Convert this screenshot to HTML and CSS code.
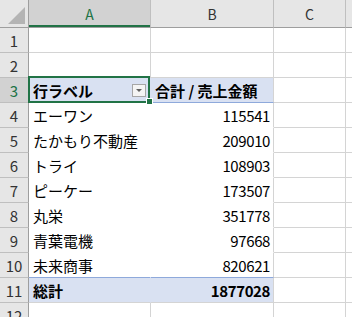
FILE: index.html
```html
<!DOCTYPE html>
<html lang="ja">
<head>
    <meta charset="UTF-8">
    <meta name="viewport" content="width=device-width, initial-scale=1.0">
    <title>ピボットテーブル</title>
    <link rel="stylesheet" href="styles.css">
</head>
<body>
    <!-- Worksheet grid: row header + columns A, B, C and a sliver of D -->
    <div class="sheet">
        <div class="corner"><span class="corner-tri"></span></div>
        <div class="colhead selected">A</div>
        <div class="colhead">B</div>
        <div class="colhead">C</div>
        <div class="colhead"></div>

        <div class="rowhead">1</div>
        <div class="cell"></div><div class="cell"></div><div class="cell"></div><div class="cell"></div>

        <div class="rowhead">2</div>
        <div class="cell"></div><div class="cell"></div><div class="cell"></div><div class="cell"></div>

        <!-- Pivot table header -->
        <div class="rowhead selected">3</div>
        <div class="cell pivot-head label active">
            <span>行ラベル</span>
            <span class="filter-btn"><span class="filter-arrow"></span></span>
            <span class="selbox"></span>
            <span class="fill-handle"></span>
        </div>
        <div class="cell pivot-head">合計 / 売上金額</div>
        <div class="cell"></div><div class="cell"></div>

        <div class="rowhead">4</div>
        <div class="cell pivot label">エーワン</div><div class="cell pivot num">115541</div>
        <div class="cell"></div><div class="cell"></div>

        <div class="rowhead">5</div>
        <div class="cell pivot label">たかもり不動産</div><div class="cell pivot num">209010</div>
        <div class="cell"></div><div class="cell"></div>

        <div class="rowhead">6</div>
        <div class="cell pivot label">トライ</div><div class="cell pivot num">108903</div>
        <div class="cell"></div><div class="cell"></div>

        <div class="rowhead">7</div>
        <div class="cell pivot label">ピーケー</div><div class="cell pivot num">173507</div>
        <div class="cell"></div><div class="cell"></div>

        <div class="rowhead">8</div>
        <div class="cell pivot label">丸栄</div><div class="cell pivot num">351778</div>
        <div class="cell"></div><div class="cell"></div>

        <div class="rowhead">9</div>
        <div class="cell pivot label">青葉電機</div><div class="cell pivot num">97668</div>
        <div class="cell"></div><div class="cell"></div>

        <div class="rowhead">10</div>
        <div class="cell pivot label last">未来商事</div><div class="cell pivot last num">820621</div>
        <div class="cell"></div><div class="cell"></div>

        <!-- Grand total -->
        <div class="rowhead">11</div>
        <div class="cell pivot-total label">総計</div><div class="cell pivot-total num">1877028</div>
        <div class="cell"></div><div class="cell"></div>

        <div class="rowhead">12</div>
        <div class="cell"></div><div class="cell"></div><div class="cell"></div><div class="cell"></div>
    </div>
</body>
</html>
```

FILE: styles.css
```css
html, body {
    margin: 0;
    background: #fff;
    overflow: hidden;
}
.sheet {
    display: grid;
    grid-template-columns: 29px 122px 123px 72px 1fr;
    grid-template-rows: 28px;
    grid-auto-rows: 25px;
    font-family: "Noto Sans CJK JP", "Noto Sans", sans-serif;
    font-size: 15px;
    color: #000;
}
.corner, .colhead, .rowhead, .cell {
    box-sizing: border-box;
    display: flex;
    align-items: center;
}
.corner {
    position: relative;
    background: #e6e6e6;
    border-right: 1px solid #9e9e9e;
    border-bottom: 1px solid #9e9e9e;
}
.corner-tri {
    position: absolute;
    left: 8px;
    top: 7px;
    width: 0;
    height: 0;
    border-left: 17px solid transparent;
    border-bottom: 17px solid #b4b4b4;
}
.colhead {
    justify-content: center;
    background: #e6e6e6;
    border-right: 1px solid #bfbfbf;
    border-bottom: 1px solid #9e9e9e;
    font-size: 14px;
    color: #333;
    padding-top: 1px;
}
.colhead.selected {
    background: #d2d2d2;
    color: #217346;
    box-shadow: inset 0 -2px 0 #217346;
}
.rowhead {
    justify-content: center;
    background: #e6e6e6;
    border-right: 1px solid #9e9e9e;
    border-bottom: 1px solid #bfbfbf;
    color: #333;
}
.rowhead.selected {
    background: #d2d2d2;
    color: #217346;
}
.cell {
    border-right: 1px solid #d4d4d4;
    border-bottom: 1px solid #d4d4d4;
    padding: 0 3px 0 4px;
    white-space: nowrap;
}
.num {
    justify-content: flex-end;
    letter-spacing: -0.4px;
}
/* pivot table fills hide the gridlines inside it */
.pivot-head {
    background: #d9e1f2;
    border-bottom-color: #8ea9db;
    font-weight: bold;
}
.pivot-head.label {
    border-right-color: #d9e1f2;
}
.pivot-head.active {
    position: relative;
    justify-content: space-between;
    padding-right: 4px;
}
.pivot {
    background: #fff;
    border-bottom-color: #fff;
}
.pivot.label {
    border-right-color: #fff;
}
.pivot.last {
    border-bottom-color: #8ea9db;
}
.pivot-total {
    background: #d9e1f2;
    font-weight: bold;
}
.pivot-total.label {
    border-right-color: #d9e1f2;
}
/* dropdown filter button in the pivot header */
.filter-btn {
    box-sizing: border-box;
    width: 14px;
    height: 13px;
    border: 1px solid #a6a6a6;
    background: #f4f4f4;
    display: flex;
    align-items: center;
    justify-content: center;
}
.filter-arrow {
    width: 0;
    height: 0;
    border-left: 3px solid transparent;
    border-right: 3px solid transparent;
    border-top: 3px solid #606060;
    margin-top: 1px;
}
/* active cell selection */
.selbox {
    position: absolute;
    left: -1px;
    top: -2px;
    width: 122px;
    height: 27px;
    box-sizing: border-box;
    border: 2px solid #217346;
}
.fill-handle {
    position: absolute;
    left: 118px;
    top: 21px;
    width: 5px;
    height: 5px;
    background: #217346;
    box-shadow: 0 0 0 1px #fff;
}
```
